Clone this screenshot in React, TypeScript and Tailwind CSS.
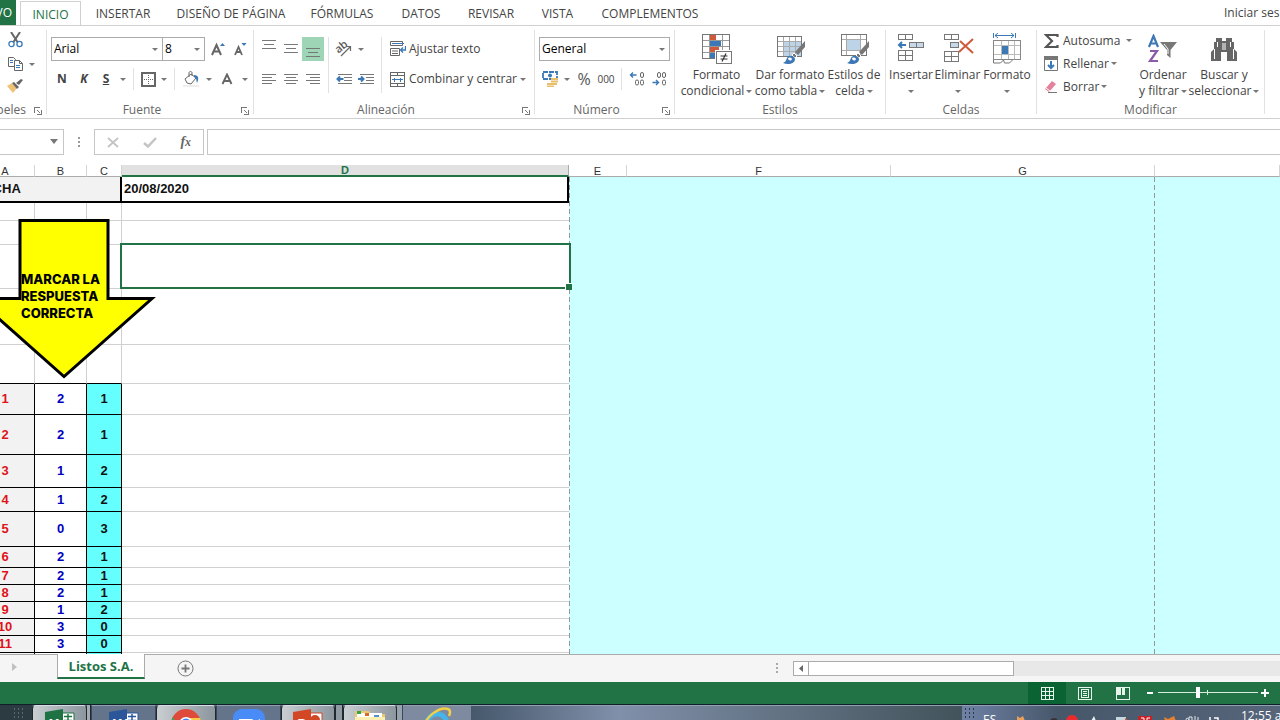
import type { ReactNode } from "react";

const tabs = [
  { label: "INICIO", width: "w-[61px]", active: true },
  { label: "INSERTAR", width: "w-[84px]" },
  { label: "DISEÑO DE PÁGINA", width: "w-[132px]" },
  { label: "FÓRMULAS", width: "w-[90px]" },
  { label: "DATOS", width: "w-[68px]" },
  { label: "REVISAR", width: "w-[72px]" },
  { label: "VISTA", width: "w-[61px]" },
  { label: "COMPLEMENTOS", width: "w-[124px]" },
];

const emptyRows = ["h-[18px]", "h-[24px]", "h-[44px]", "h-[56px]", "h-[39px]"];

const answers = [
  { n: 1, b: 2, c: 1, h: "h-[31px]" },
  { n: 2, b: 2, c: 1, h: "h-[40px]" },
  { n: 3, b: 1, c: 2, h: "h-[33px]" },
  { n: 4, b: 1, c: 2, h: "h-[24px]" },
  { n: 5, b: 0, c: 3, h: "h-[35px]" },
  { n: 6, b: 2, c: 1, h: "h-[21px]" },
  { n: 7, b: 2, c: 1, h: "h-[17px]" },
  { n: 8, b: 2, c: 1, h: "h-[17px]" },
  { n: 9, b: 1, c: 2, h: "h-[17px]" },
  { n: 10, b: 3, c: 0, h: "h-[17px]" },
  { n: 11, b: 3, c: 0, h: "h-[17px]" },
];

function Caret({ className = "" }: { className?: string }) {
  return (
    <svg width="6" height="3" viewBox="0 0 6 3" className={`inline-block shrink-0 ${className}`} aria-hidden="true">
      <path d="M0 0h6L3 3z" fill="#777" />
    </svg>
  );
}

function CaretButton({ label }: { label: string }) {
  return (
    <button aria-label={label} className="flex h-6 w-3 shrink-0 items-center justify-center">
      <Caret />
    </button>
  );
}

function Tool({ label, width = "w-[22px]", className = "", children }: { label: string; width?: string; className?: string; children: ReactNode }) {
  return (
    <button aria-label={label} className={`flex h-6 shrink-0 items-center justify-center ${width} ${className}`}>
      {children}
    </button>
  );
}

function Sep({ tall = false }: { tall?: boolean }) {
  return <span className={`mx-1 w-px shrink-0 bg-[#e1e1e1] ${tall ? "h-14" : "h-[22px]"}`} />;
}

function Group({ title, width, launcher = false, children }: { title: string; width: string; launcher?: boolean; children: ReactNode }) {
  return (
    <section aria-label={title} className={`h-[84px] shrink-0 border-r border-[#e1e1e1] ${width}`}>
      <div className="h-[72px]">{children}</div>
      <div className="flex h-4 items-center">
        <span className={`flex-1 text-center text-[#666] ${launcher ? "pr-1" : ""}`}>{title}</span>
        {launcher && (
          <button aria-label={`Más opciones de ${title}`} className="mt-px mr-1">
            <svg width="8" height="8" viewBox="0 0 8 8" fill="none" stroke="#777" shapeRendering="crispEdges">
              <path d="M.5 6V.5H6M3 3l3.5 3.5M7.5 3v4.500H3" />
            </svg>
          </button>
        )}
      </div>
    </section>
  );
}

function BigButton({ icon, top, bottom, width }: { icon: ReactNode; top: string; bottom?: string; width: string }) {
  return (
    <button className={`flex shrink-0 flex-col items-center pt-[3px] whitespace-nowrap ${width}`}>
      <span className="mb-[2px] flex h-8 items-center">{icon}</span>
      <span className="leading-4">{top}</span>
      <span className="flex h-4 items-center gap-[2px] leading-4">
        {bottom}
        <Caret />
      </span>
    </button>
  );
}

function Combo({ label, value, width }: { label: string; value: string; width: string }) {
  return (
    <div className={`relative shrink-0 ${width}`}>
      <select aria-label={label} className="h-6 w-full appearance-none border border-[#ababab] bg-white pl-[2px] text-black outline-none">
        <option>{value}</option>
      </select>
      <Caret className="pointer-events-none absolute top-[11px] right-[5px]" />
    </div>
  );
}

function Lines({ d }: { d: string }) {
  return (
    <svg width="14" height="12" viewBox="0 0 14 12" stroke="#777" shapeRendering="crispEdges" aria-hidden="true">
      <path d={d} />
    </svg>
  );
}

function IndentIcon({ right = false }: { right?: boolean }) {
  return (
    <svg width="16" height="12" viewBox="0 0 16 12" fill="none" aria-hidden="true">
      <path d="M2 1.500h14M8 4.500h8M8 7.500h8M2 10.500h14" stroke="#777" shapeRendering="crispEdges" />
      <path d={right ? "M0 6h6M3 3.500L5.500 6 3 8.500" : "M1.500 6h6M4 3.500L1.500 6 4 8.500"} stroke="#3b78b5" strokeWidth="2" />
    </svg>
  );
}

function Brush() {
  return (
    <g>
      <path d="M29 8v6l-7 8-3-3z" fill="#777" />
      <path d="M18 20l3 3-2 2-3-3z" fill="#777" stroke="#fff" />
      <path d="M7 30c3-1 3-3 4-5 2-4 8-2 8 1 0 5-7 6-12 4z" fill="#3b78b5" />
      <path d="M12 26c0-2 3-2 4 0-1 2-2 2-4 0z" fill="#fff" />
    </g>
  );
}

function ConditionalIcon() {
  return (
    <svg width="32" height="32" viewBox="1 0 32 32" aria-hidden="true">
      <g shapeRendering="crispEdges">
        <path d="M2.500 1.500h27v24h-27zM2.500 7.500h27M2.500 13.500h27M2.500 19.500h27M9.500 1.500v24M22.500 1.500v24" fill="#fff" stroke="#999" />
        <path d="M2.500 1.500h27v24h-27z" fill="none" stroke="#777" />
        <path d="M10 2h6v5h-6zM10 14h9v5h-9z" fill="#d0583b" />
        <path d="M10 8h11v5h-11zM10 20h6v5h-6z" fill="#3b78b5" />
        <path d="M15 17h17v2H17v12h-2z" fill="#fff" />
        <path d="M16.500 18.500h15v12h-15z" fill="#fff" stroke="#777" />
      </g>
      <path d="M20.500 23h7M20.500 26h7M26 20.500l-4 8" stroke="#333" fill="none" strokeWidth="1.200" />
    </svg>
  );
}

function TableFormatIcon() {
  return (
    <svg width="32" height="32" viewBox="0 0 32 32" className="ml-1" aria-hidden="true">
      <g shapeRendering="crispEdges">
        <path d="M1.500 3.500h24v20h-24z" fill="#fff" />
        <path d="M8 9h18v14H8z" fill="#bdd3e8" />
        <path d="M1.500 8.500h24M1.500 13.500h24M1.500 18.500h24M7.500 3.500v20M13.500 3.500v20M19.500 3.500v20" stroke="#aaa" />
        <path d="M1.500 3.500h24v20h-24z" fill="none" stroke="#777" />
      </g>
      <Brush />
    </svg>
  );
}

function CellStyleIcon() {
  return (
    <svg width="32" height="32" viewBox="0 0 32 32" className="ml-1" aria-hidden="true">
      <g shapeRendering="crispEdges">
        <path d="M1.500 1.500h25v21h-25zM1.500 6.500h25M1.500 17.500h25M6.500 1.500v21M20.500 1.500v21" fill="#fff" stroke="#aaa" />
        <path d="M1.500 1.500h25v21h-25z" fill="none" stroke="#777" />
        <path d="M7 7h13v10H7z" fill="#bdd3e8" />
      </g>
      <Brush />
    </svg>
  );
}

function InsertIcon() {
  return (
    <svg width="28" height="32" viewBox="0 0 28 32" fill="#fff" stroke="#777" aria-hidden="true">
      <path shapeRendering="crispEdges" d="M1.500 1.500h14v5h-14zM8.500 1.500v5M1.500 17.500h14v10h-14zM8.500 17.500v10M1.500 22.500h14" />
      <path shapeRendering="crispEdges" d="M12.500 9.500h14v5h-14zM19.500 9.500v5" fill="#c9d8e8" />
      <path d="M2 12h7M5 9l-3 3 3 3" stroke="#3b78b5" strokeWidth="2" fill="none" />
    </svg>
  );
}

function DeleteIcon() {
  return (
    <svg width="30" height="32" viewBox="0 0 30 32" fill="#fff" stroke="#777" className="ml-[3px]" aria-hidden="true">
      <path shapeRendering="crispEdges" d="M.500 1.500h14v5h-14zM7.500 1.500v5M.500 18.500h14v10h-14zM7.500 18.500v10M.500 23.500h14" />
      <path shapeRendering="crispEdges" d="M6.500 9.500h8v5h-8z" fill="#c9d8e8" />
      <path d="M16 8l13 12M29 6L15 19" stroke="#d0583b" strokeWidth="2" />
    </svg>
  );
}

function FormatIcon() {
  return (
    <svg width="30" height="32" viewBox="0 0 30 32" fill="none" stroke="#999" aria-hidden="true">
      <path d="M1.500 0v5M23.500 0v5M3 2.500h19M6 0L3 2.500 6 5M19 0l3 2.500L19 5" stroke="#3b78b5" />
      <g shapeRendering="crispEdges">
        <path d="M1.500 7.500h27v19h-27zM1.500 12.500h27M1.500 21.500h27M9.500 7.500v19M16.500 7.500v19M22.500 7.500v19" fill="#fff" stroke="#bbb" />
        <path d="M1.500 7.500h27v19h-27z" stroke="#888" />
        <path d="M10 13h6v8h-6z" fill="#3b78b5" stroke="none" />
      </g>
      <path d="M1.500 27v3h7l3-3 1 3h5l3-3" stroke="#777" />
    </svg>
  );
}

function BinocularsIcon() {
  return (
    <svg width="28" height="26" viewBox="0 0 28 26" fill="#666" aria-hidden="true">
      <path d="M6 2h6v3h4V2h6v4h2v7l3 3v9H17v-9h-6v9H1v-9l3-3V6h2z" />
      <path d="M7.500 6v5M20.500 6v5M4.500 13v10M23.500 13v10M13 7v7M15 7v7" stroke="#fff" />
    </svg>
  );
}

function SortFilterIcon() {
  return (
    <svg width="32" height="30" viewBox="0 0 32 30" aria-hidden="true">
      <path d="M2 13L6.500 2 11 13M3.500 9.500h6" fill="none" stroke="#3b78b5" strokeWidth="2.200" />
      <path d="M3 17h7L3 27h8" fill="none" stroke="#8b5aa8" strokeWidth="2.200" />
      <path d="M13 8h17l-6.500 8v8L20 21v-5z" fill="#777" />
      <path d="M17 10l4 5v5" fill="none" stroke="#fff" />
    </svg>
  );
}

function SmallButton({ icon, label, gap = "gap-1" }: { icon: ReactNode; label: string; gap?: string }) {
  return (
    <button className="flex h-[23px] items-center gap-1 whitespace-nowrap">
      <span className="flex w-4 justify-center">{icon}</span>
      <span className={`flex items-center ${gap}`}>
        {label}
        <Caret />
      </span>
    </button>
  );
}

function Ribbon() {
  return (
    <div className="flex h-[93px] shrink-0 overflow-hidden border-b border-[#d0d0d0] pt-1 text-[#444]">
      <Group title="Portapapeles" width="-ml-[52px] w-[99px]" launcher>
        <div className="flex h-full flex-col pl-[56px]">
          <Tool label="Cortar" className="-mt-[2px]">
            <svg width="15" height="16" viewBox="0 0 15 16" fill="none" aria-hidden="true">
              <path d="M3 0l6.500 10M12 0L5.500 10" stroke="#666" strokeWidth="2" />
              <circle cx="3.500" cy="12" r="2.600" stroke="#3b78b5" strokeWidth="1.300" />
              <circle cx="11.500" cy="12" r="2.600" stroke="#3b78b5" strokeWidth="1.300" />
            </svg>
          </Tool>
          <div className="flex">
            <Tool label="Copiar">
              <svg width="15" height="14" viewBox="0 0 15 14" fill="#fff" stroke="#666" aria-hidden="true">
                <path d="M.500.500h5l2 2v7h-7z" />
                <path d="M6.500 3.500h5l3 3v7h-8zM11.500 3.500v3h3" />
                <path d="M2 3.500h3M2 5.500h3M8 8.500h4M8 10.500h4" stroke="#3b78b5" />
              </svg>
            </Tool>
            <CaretButton label="Opciones de copia" />
          </div>
          <Tool label="Copiar formato" className="-mt-[2px]">
            <svg width="16" height="14" viewBox="0 0 16 14" aria-hidden="true">
              <path d="M0 7l5-3 5 5-4 5z" fill="#eec277" />
              <path d="M5 4l2-1 5 5-2 2zM9 4l5-4 2 1-4 5z" fill="#666" />
            </svg>
          </Tool>
        </div>
      </Group>

      <Group title="Fuente" width="w-[207px]" launcher>
        <div className="flex flex-col gap-[6px] pt-[7px] pl-1">
          <div className="flex items-center">
            <Combo label="Fuente" value="Arial" width="w-[112px]" />
            <Combo label="Tamaño de fuente" value="8" width="-ml-px w-[43px]" />
            <Tool label="Aumentar tamaño" className="ml-[2px]">
              <svg width="14" height="14" viewBox="0 0 14 14" aria-hidden="true">
                <path d="M1 13L5.500 3 10 13M2.800 9.500h5.400" fill="none" stroke="#666" strokeWidth="2" />
                <path d="M9 4l2.500-3L14 4z" fill="#3b78b5" />
              </svg>
            </Tool>
            <Tool label="Disminuir tamaño">
              <svg width="13" height="14" viewBox="0 0 13 14" aria-hidden="true">
                <path d="M1 13l3.500-8L8 13M2.500 10h4" fill="none" stroke="#666" strokeWidth="1.800" />
                <path d="M7.500 1h5L10 4z" fill="#3b78b5" />
              </svg>
            </Tool>
          </div>
          <div className="flex items-center">
            <Tool label="Negrita"><b>N</b></Tool>
            <Tool label="Cursiva"><b className="italic">K</b></Tool>
            <Tool label="Subrayado"><b className="underline">S</b></Tool>
            <CaretButton label="Opciones de subrayado" />
            <Sep />
            <Tool label="Bordes" width="w-5">
              <svg width="15" height="15" viewBox="0 0 15 15" fill="none" stroke="#666" shapeRendering="crispEdges" aria-hidden="true">
                <path d="M1 1h13v13H1z" strokeWidth="2" />
                <path d="M7.500 3v9M3 7.500h9" strokeDasharray="1 1" />
              </svg>
            </Tool>
            <CaretButton label="Opciones de bordes" />
            <Sep />
            <Tool label="Color de relleno" width="w-6">
              <svg width="16" height="16" viewBox="0 0 16 16" fill="none" aria-hidden="true">
                <path d="M2 8l6-5 5 4-5 6-4-1zM6 6V2c0-2 3-2 3 0v3" stroke="#666" />
                <path d="M11 4c5 0 5 4 3 8-1-3 0-5-3-6z" fill="#3b78b5" />
                <path d="M0 14h16v2H0z" fill="#eee" />
              </svg>
            </Tool>
            <CaretButton label="Opciones de relleno" />
            <Tool label="Color de fuente" width="w-6">
              <svg width="12" height="12" viewBox="0 0 12 12" fill="none" stroke="#666" strokeWidth="1.900" aria-hidden="true">
                <path d="M1.500 11L6 1.500 10.500 11M3 8h6" />
              </svg>
            </Tool>
            <CaretButton label="Opciones de color de fuente" />
          </div>
        </div>
      </Group>

      <Group title="Alineación" width="w-[281px]" launcher>
        <div className="flex items-start pt-[7px] pl-1">
          <div className="grid grid-cols-3 gap-y-[6px]">
            <Tool label="Alinear arriba" className="pb-2"><Lines d="M0 1.500h14M2 5.500h10M0 9.500h14" /></Tool>
            <Tool label="Alinear en medio"><Lines d="M0 1.500h14M2 5.500h10M0 9.500h14" /></Tool>
            <Tool label="Alinear abajo" className="bg-[#9fd5b7] pt-2"><Lines d="M0 1.500h14M2 5.500h10M0 9.500h14" /></Tool>
            <Tool label="Izquierda"><Lines d="M0 1.500h14M0 4.500h10M0 7.500h14M0 10.500h10" /></Tool>
            <Tool label="Centrar"><Lines d="M0 1.500h14M2 4.500h10M0 7.500h14M2 10.500h10" /></Tool>
            <Tool label="Derecha"><Lines d="M0 1.500h14M4 4.500h10M0 7.500h14M4 10.500h10" /></Tool>
          </div>
          <Sep tall />
          <div className="flex w-11 flex-col gap-[6px]">
            <div className="flex">
              <Tool label="Orientación">
                <svg width="18" height="17" viewBox="0 0 18 17" aria-hidden="true">
                  <text x="1" y="10" transform="rotate(-40 6 8)" fontSize="11" fontWeight="600" fill="#555" fontFamily="Open Sans, sans-serif">ab</text>
                  <path d="M6 15l9-9M11 5.500h4.500V10" fill="none" stroke="#666" strokeWidth="1.200" />
                </svg>
              </Tool>
              <CaretButton label="Opciones de orientación" />
            </div>
            <div className="flex">
              <Tool label="Disminuir sangría"><IndentIcon /></Tool>
              <Tool label="Aumentar sangría"><IndentIcon right /></Tool>
            </div>
          </div>
          <Sep tall />
          <div className="flex flex-1 flex-col gap-[6px] pl-1">
            <button className="flex h-6 items-center gap-[3px]">
              <svg width="16" height="16" viewBox="0 0 16 16" fill="none" stroke="#666" aria-hidden="true">
                <path d="M.500.500h12v4h-12zM.500 7.500h9v7h-9zM2 10h6M2 12.500h6" />
                <path d="M2 2.500h12" stroke="#3b78b5" />
                <path d="M15.500 5v4h-5M13 6.500L10.500 9l2.500 2.500" stroke="#3b78b5" strokeWidth="1.300" />
              </svg>
              Ajustar texto
            </button>
            <div className="flex items-center">
              <button className="flex h-6 items-center gap-[3px] whitespace-nowrap">
                <svg width="16" height="15" viewBox="0 0 16 15" fill="none" stroke="#666" shapeRendering="crispEdges" aria-hidden="true">
                  <path d="M.500.500h14v14H.500zM.500 3.500h14M.500 11.500h14M7.500.500v3M7.500 11.500v3" />
                  <path d="M2 7.500h11M4.500 5.500v4M10.500 5.500v4" stroke="#3b78b5" />
                </svg>
                Combinar y centrar
              </button>
              <span className="flex-1" />
              <span className="mr-[5px] flex"><CaretButton label="Opciones de combinar" /></span>
            </div>
          </div>
        </div>
      </Group>

      <Group title="Número" width="w-[140px]" launcher>
        <div className="flex flex-col gap-[6px] pt-[7px] pl-1">
          <Combo label="Formato de número" value="General" width="w-[131px]" />
          <div className="flex items-center">
            <Tool label="Formato de contabilidad">
              <svg width="16" height="16" viewBox="0 0 16 16" aria-hidden="true">
                <path d="M1 1h14v7H1z" fill="#fff" stroke="#3b78b5" strokeWidth="1.800" strokeDasharray="5 1" />
                <circle cx="8" cy="4.500" r="2" fill="#3b78b5" />
                <path d="M9 8h7M9 10.500h7M5 13h6M9 13h6M5 15.500h7" stroke="#eabf6b" strokeWidth="1.900" />
              </svg>
            </Tool>
            <CaretButton label="Opciones de contabilidad" />
            <Tool label="Porcentaje" className="text-[16px] text-[#555]">%</Tool>
            <Tool label="Estilo millares" className="text-[10px]">000</Tool>
            <Sep />
            <Tool label="Aumentar decimales">
              <svg width="16" height="14" viewBox="0 0 16 14" fill="none" stroke="#666" aria-hidden="true">
                <rect x="11.500" y=".500" width="3" height="5" rx="1.500" />
                <rect x="6.500" y="8" width="3" height="5" rx="1.500" /><rect x="11.500" y="8" width="3" height="5" rx="1.500" />
                <path d="M1.500 3h6M4 .500L1.500 3 4 5.500" stroke="#3b78b5" strokeWidth="1.400" />
              </svg>
            </Tool>
            <Tool label="Disminuir decimales">
              <svg width="16" height="14" viewBox="0 0 16 14" fill="none" stroke="#666" aria-hidden="true">
                <rect x="6.500" y=".500" width="3" height="5" rx="1.500" /><rect x="11.500" y=".500" width="3" height="5" rx="1.500" />
                <rect x="11.500" y="8" width="3" height="5" rx="1.500" />
                <path d="M1.500 10.500h6M5 8l2.500 2.500L5 13" stroke="#3b78b5" strokeWidth="1.400" />
              </svg>
            </Tool>
          </div>
        </div>
      </Group>

      <Group title="Estilos" width="w-[211px]">
        <div className="flex pl-[5px]">
          <BigButton icon={<ConditionalIcon />} top="Formato" bottom="condicional" width="w-[73px]" />
          <BigButton icon={<TableFormatIcon />} top="Dar formato" bottom="como tabla" width="w-[74px]" />
          <BigButton icon={<CellStyleIcon />} top="Estilos de" bottom="celda" width="w-[54px]" />
        </div>
      </Group>

      <Group title="Celdas" width="w-[151px]">
        <div className="flex pl-[2px]">
          <BigButton icon={<InsertIcon />} top="Insertar" width="w-[46px]" />
          <BigButton icon={<DeleteIcon />} top="Eliminar" width="w-[47px]" />
          <BigButton icon={<FormatIcon />} top="Formato" width="w-[52px]" />
        </div>
      </Group>

      <Group title="Modificar" width="w-[228px]">
        <div className="flex pl-[6px]">
          <div className="-mt-px w-[95px]">
            <SmallButton
              label="Autosuma"
              gap="gap-[6px]"
              icon={
                <svg width="15" height="16" viewBox="0 0 15 16" aria-hidden="true">
                  <path d="M13.500 4V2H2l6 6-6 6h11.500v-2" fill="none" stroke="#555" strokeWidth="2.200" />
                </svg>
              }
            />
            <SmallButton
              label="Rellenar"
              gap="gap-[2px]"
              icon={
                <svg width="14" height="15" viewBox="0 0 14 15" fill="none" aria-hidden="true">
                  <path d="M.500 1.500h13v13H.500z" stroke="#777" />
                  <path d="M0 0h14v4H0z" fill="#777" />
                  <path d="M7 5v7M4 9l3 3 3-3" stroke="#3b78b5" strokeWidth="2" />
                </svg>
              }
            />
            <SmallButton
              label="Borrar"
              gap="gap-[2px]"
              icon={
                <svg width="14" height="14" viewBox="0 0 14 14" aria-hidden="true">
                  <path d="M1 9l7-8 4 3-7 8z" fill="#e5819a" />
                  <path d="M2 8l4 3" stroke="#fff" />
                  <path d="M4 12.500h9" stroke="#777" />
                </svg>
              }
            />
          </div>
          <BigButton icon={<SortFilterIcon />} top="Ordenar" bottom="y filtrar" width="w-[50px]" />
          <BigButton icon={<BinocularsIcon />} top="Buscar y" bottom="seleccionar" width="w-[72px]" />
        </div>
      </Group>
    </div>
  );
}

function FormulaBar() {
  return (
    <div className="flex h-[46px] shrink-0 items-start pt-[10px]">
      <div className="relative -ml-4 w-20">
        <input aria-label="Cuadro de nombres" className="h-[26px] w-full border border-[#c6c6c6] outline-none" />
        <svg className="pointer-events-none absolute top-[10px] right-[6px]" width="8" height="5" viewBox="0 0 8 5" aria-hidden="true">
          <path d="M0 0h8L4 5z" fill="#777" />
        </svg>
      </div>
      <svg className="mx-[14px] mt-2" width="2" height="11" viewBox="0 0 2 11" aria-hidden="true">
        <path d="M0 0h2v2H0zM0 4h2v2H0zM0 8h2v2H0z" fill="#999" />
      </svg>
      <div className="flex h-[26px] w-[110px] items-center justify-around border border-[#c6c6c6]">
        <button aria-label="Cancelar">
          <svg width="12" height="11" viewBox="0 0 12 11" stroke="#c4c4c4" strokeWidth="1.800"><path d="M1 1l10 9M11 1L1 10" /></svg>
        </button>
        <button aria-label="Aceptar">
          <svg width="14" height="11" viewBox="0 0 14 11" fill="none" stroke="#c4c4c4" strokeWidth="2.500"><path d="M1 6l4 3.500L13 1" /></svg>
        </button>
        <button aria-label="Insertar función" className="font-['Liberation_Serif',serif] text-[14px] leading-4 font-bold text-[#666] italic">
          f<span className="text-[12px]">x</span>
        </button>
      </div>
      <input aria-label="Barra de fórmulas" className="ml-[3px] h-[26px] min-w-0 flex-1 border border-r-0 border-[#c6c6c6] outline-none" />
    </div>
  );
}

function Sheet() {
  const head = "h-3 border-r border-b border-[#ababab] border-r-[#d4d4d4] p-0 text-[11px] leading-[10px] font-normal text-[#333]";
  return (
    <div className="relative min-h-0 flex-1 overflow-hidden font-['Liberation_Sans',Arial,sans-serif]">
      <table className="-ml-6 w-[calc(100%+24px)] table-fixed border-separate border-spacing-0">
        <colgroup>
          <col className="w-[59px]" />
          <col className="w-[52px]" />
          <col className="w-[35px]" />
          <col className="w-[447px]" />
          <col className="w-[58px]" />
          <col className="w-[264px]" />
          <col className="w-[264px]" />
          <col />
        </colgroup>
        <thead>
          <tr>
            <th className={head}>A</th>
            <th className={head}>B</th>
            <th className={head}>C</th>
            <th className="h-3 border-r border-b-2 border-r-[#ababab] border-b-[#217346] bg-[#e1e1e1] p-0 text-[11px] leading-[10px] font-bold text-[#217346]">D</th>
            <th className={head}>E</th>
            <th className={head}>F</th>
            <th className={head}>G</th>
            <th className={head} aria-label="H" />
          </tr>
        </thead>
        <tbody className="text-[13px] leading-4">
          <tr>
            <td colSpan={3} className="h-[26px] border-r-2 border-b-2 border-black bg-[#f2f2f2] p-0 font-bold text-[#111]">FECHA</td>
            <td className="border-r-2 border-b-2 border-black p-0 pl-[2px] font-bold text-[#111]">20/08/2020</td>
            <td
              colSpan={3}
              rowSpan={18}
              className="bg-[#ccffff] bg-[repeating-linear-gradient(to_bottom,#999_0_5px,transparent_5px_8px),repeating-linear-gradient(to_bottom,#999_0_5px,transparent_5px_8px)] bg-[length:1px_100%] bg-[position:left_top,right_top] bg-no-repeat p-0"
            />
            <td rowSpan={18} className="bg-[#ccffff] p-0" />
          </tr>
          {emptyRows.map((h, i) => {
            const edge = i === emptyRows.length - 1 ? "border-b-black" : "border-b-[#d0d0d0]";
            return (
              <tr key={i}>
                <td className={`border-r border-b border-r-[#d0d0d0] p-0 ${h} ${edge}`} />
                <td className={`border-r border-b border-r-[#d0d0d0] p-0 ${edge}`} />
                <td className={`border-r border-b border-r-[#d0d0d0] p-0 ${edge}`} />
                <td className="border-b border-[#d0d0d0] p-0" />
              </tr>
            );
          })}
          {answers.map((row) => (
            <tr key={row.n} className="text-center font-bold">
              <td className={`border-r border-b border-black bg-[#f2f2f2] p-0 text-[#e0121a] ${row.h}`}>{row.n}</td>
              <td className="border-r border-b border-black p-0 text-[#0000c0]">{row.b}</td>
              <td className="border-r border-b border-black bg-[#66ffff] p-0 text-[#111]">{row.c}</td>
              <td className="border-b border-[#d0d0d0] p-0" />
            </tr>
          ))}
          <tr>
            <td className="h-5 border-r border-black bg-[#f2f2f2] p-0" />
            <td className="border-r border-black p-0" />
            <td className="border-r border-black bg-[#66ffff] p-0" />
            <td className="p-0" />
          </tr>
        </tbody>
      </table>

      <div className="pointer-events-none absolute top-[78px] left-[120px] h-[46px] w-[451px] border-2 border-[#217346]">
        <span className="absolute -right-[3px] -bottom-[3px] size-[7px] border-t border-l border-white bg-[#217346]" />
      </div>

      <div className="absolute top-[53px] -left-[30px] h-[162px] w-[188px]">
        <svg width="188" height="162" viewBox="0 0 188 162" className="block" aria-hidden="true">
          <path d="M50 2.500h88V80.500h44L94 158.500 6 80.500h44z" fill="#ffff00" stroke="#000" strokeWidth="3" />
        </svg>
        <p className="absolute top-[53px] left-[51px] w-[110px] font-['Inter',sans-serif] text-[13px] leading-[17px] font-extrabold text-black">
          MARCAR LA
          <br />
          RESPUESTA
          <br />
          CORRECTA
        </p>
      </div>
    </div>
  );
}

function SheetTabs() {
  return (
    <div className="flex h-7 shrink-0 items-start border-t border-[#ababab] bg-[#f5f5f5]">
      <button aria-label="Hoja siguiente" className="flex h-6 w-[57px] items-center pl-3">
        <svg width="5" height="8" viewBox="0 0 5 8"><path d="M0 0l5 4-5 4z" fill="#c0c0c0" /></svg>
      </button>
      <button className="-mt-px h-[25px] w-[88px] border-x border-b-2 border-x-[#ababab] border-b-[#217346] bg-white text-[13px] font-bold whitespace-nowrap text-[#217346]">
        Listos S.A.
      </button>
      <button aria-label="Hoja nueva" className="mt-[5px] ml-8">
        <svg width="17" height="17" viewBox="0 0 17 17" fill="none" stroke="#777">
          <circle cx="8.500" cy="8.500" r="7.500" />
          <path d="M8.500 4.500v8M4.500 8.500h8" strokeWidth="1.800" />
        </svg>
      </button>
      <span className="w-[582px] shrink-0" />
      <svg className="mt-2 shrink-0" width="2" height="11" viewBox="0 0 2 11" aria-hidden="true">
        <path d="M0 0h2v2H0zM0 4h2v2H0zM0 8h2v2H0z" fill="#aaa" />
      </svg>
      <div className="mt-[6px] ml-[15px] flex h-[15px] flex-1 bg-[#e8e8e8]">
        <button aria-label="Desplazar a la izquierda" className="flex w-4 items-center justify-center border border-[#ababab] bg-white">
          <svg width="4" height="7" viewBox="0 0 4 7"><path d="M4 0v7L0 3.500z" fill="#666" /></svg>
        </button>
        <div className="-ml-px w-[206px] border border-[#ababab] bg-white" />
      </div>
    </div>
  );
}

function StatusBar() {
  return (
    <div className="flex h-[22px] shrink-0 items-center justify-end bg-[#217346] pr-2">
      <button aria-label="Normal" className="flex h-full w-[38px] items-center justify-center bg-[#0a6332]">
        <svg width="13" height="13" viewBox="0 0 13 13" fill="none" stroke="#e8f5ec" shapeRendering="crispEdges">
          <path d="M.500.500h12v12H.500zM4.500.500v12M8.500.500v12M.500 4.500h12M.500 8.500h12" />
        </svg>
      </button>
      <button aria-label="Diseño de página" className="flex h-full w-[38px] items-center justify-center">
        <svg width="14" height="13" viewBox="0 0 14 13" fill="none" stroke="#e8f5ec" shapeRendering="crispEdges">
          <path d="M.500.500h13v12H.500zM3.500 2.500h7v8h-7zM5 4.500h4M5 6.500h4M5 8.500h4" />
        </svg>
      </button>
      <button aria-label="Salto de página" className="flex h-full w-[38px] items-center justify-center">
        <svg width="14" height="13" viewBox="0 0 14 13" fill="none" stroke="#e8f5ec" shapeRendering="crispEdges">
          <path d="M.500.500h13v12H.500z" />
          <path d="M1 1h4v7H1zM6 1h3v7H6z" fill="#e8f5ec" stroke="none" />
        </svg>
      </button>
      <button aria-label="Alejar" className="flex w-4 items-center justify-center">
        <svg width="6" height="2"><path d="M0 0h6v2H0z" fill="#fff" /></svg>
      </button>
      <div className="relative h-3 w-[100px]">
        <svg className="absolute inset-x-0 top-0 w-full" height="12" viewBox="0 0 100 12" shapeRendering="crispEdges" aria-hidden="true">
          <path d="M0 5h100v1H0zM49 3h1v5h-1z" fill="#d8ebdf" />
          <path d="M38 0h4v11h-4z" fill="#fff" />
        </svg>
        <input type="range" aria-label="Zoom" defaultValue={40} className="absolute inset-0 w-full opacity-0" />
      </div>
      <button aria-label="Acercar" className="flex w-[14px] items-center justify-center">
        <svg width="8" height="8"><path d="M0 3h3V0h2v3h3v2H5v3H3V5H0z" fill="#fff" /></svg>
      </button>
    </div>
  );
}

function TaskButton({ label, width, lit = false, children }: { label: string; width: string; lit?: boolean; children: ReactNode }) {
  return (
    <button
      aria-label={label}
      className={`flex h-10 shrink-0 justify-center overflow-hidden pt-[3px] ${width} ${lit ? "rounded-t-sm border border-[#20282e] border-t-[#d8dde0] bg-linear-to-r from-[#c9ced2] to-[#8c969e]" : "border border-[#39475a] border-t-[#93a0b0] bg-[#64748b]"}`}
    >
      {children}
    </button>
  );
}

function OfficeIcon({ letter, color, round = false }: { letter: string; color: string; round?: boolean }) {
  return (
    <svg width="30" height="30" viewBox="0 0 30 30" aria-hidden="true">
      <path d="M14 4h15v22H14z" fill="#fff" stroke={color} />
      {round ? (
        <circle cx="22" cy="11" r="5" fill={color} />
      ) : (
        <path d="M19 7.500h8M19 11.500h8M23 5v10" stroke={color} strokeWidth="1.500" />
      )}
      <path d="M0 3l18-3v30L0 27z" fill={color} />
      <text x="4" y="20" fontSize="15" fontWeight="bold" fill="#fff" fontFamily="Open Sans, sans-serif">{letter}</text>
    </svg>
  );
}

function Taskbar() {
  return (
    <footer className="flex h-4 shrink-0 items-start overflow-hidden border-t border-[#10202a] bg-linear-to-r from-[#3d4a54] via-[#7b8699] via-45% to-[#47566a] text-white">
      <div className="flex h-4 w-8 shrink-0 justify-end bg-[#2c3a42] pt-[3px] pr-[9px]">
        <svg width="9" height="12" aria-hidden="true">
          <path d="M0 1h9M0 5h9M0 9h9" stroke="#8b979e" strokeDasharray="1 3" />
        </svg>
      </div>
      <TaskButton label="Excel" width="w-[55px]" lit><OfficeIcon letter="X" color="#1f7244" /></TaskButton>
      <span className="h-4 w-1 shrink-0 border-r border-[#20282e] bg-[#a5adb3]" />
      <TaskButton label="Word" width="w-[65px]"><OfficeIcon letter="W" color="#2b579a" /></TaskButton>
      <TaskButton label="Chrome" width="w-[60px]" lit>
        <svg width="30" height="30" viewBox="0 0 30 30" aria-hidden="true">
          <circle cx="15" cy="15" r="15" fill="#de4b3b" />
          <path d="M15 9h14a15 15 0 0 1-14 21z" fill="#f7cd45" />
          <path d="M2 8l13 22A15 15 0 0 1 2 8z" fill="#3aa757" />
          <circle cx="15" cy="15" r="7" fill="#fff" />
          <circle cx="15" cy="15" r="5.500" fill="#4284f3" />
        </svg>
      </TaskButton>
      <TaskButton label="Zoom" width="w-[65px]">
        <svg width="32" height="30" viewBox="0 0 32 30" aria-hidden="true">
          <rect width="32" height="30" rx="9" fill="#4a8cf7" />
          <path d="M6 10h12a3 3 0 0 1 3 3v8H6zM22 13l5-3v11l-5-3z" fill="#fff" />
        </svg>
      </TaskButton>
      <TaskButton label="PowerPoint" width="w-[54px]" lit><OfficeIcon letter="P" color="#d24726" round /></TaskButton>
      <span className="h-4 w-2 shrink-0 border-x border-[#20282e] bg-[#8f9aa3]" />
      <TaskButton label="Explorador" width="w-[54px]" lit>
        <svg width="32" height="30" viewBox="0 0 32 30" aria-hidden="true">
          <path d="M1 2h14l2 3h14v22H1z" fill="#e8c872" />
          <path d="M3 4h25v4H3z" fill="#fff" />
          <path d="M3 2h4v3H3z" fill="#37a33c" />
          <path d="M11 4h4v3h-4z" fill="#d96a2b" />
          <path d="M20 6h5v3h-5z" fill="#4a93cf" />
          <path d="M1 8h30v20H1z" fill="#fbeeb0" />
        </svg>
      </TaskButton>
      <span className="h-4 w-[6px] shrink-0 border-r border-[#39475a] bg-[#98a2ad]" />
      <button aria-label="Internet Explorer" className="flex h-4 w-[68px] shrink-0 justify-center border-t border-[#93a0b0] bg-[#7d8aa0] pt-px">
        <svg width="30" height="30" viewBox="0 0 30 30" fill="none" className="shrink-0" aria-hidden="true">
          <circle cx="15" cy="17" r="10" stroke="#46b4e8" strokeWidth="5" />
          <path d="M7 17h16" stroke="#46b4e8" strokeWidth="4" />
          <path d="M2 22C2 10 18-1 26 2c3 1 2 5 1 7" stroke="#f3cf45" strokeWidth="2.500" />
        </svg>
      </button>
      <span className="h-4 flex-1 border-t border-[#93a0b0] bg-linear-to-r from-[#46586c] via-[#8190aa] via-30% to-[#42535b]" />
      <div className="flex h-4 w-[318px] shrink-0 border-t border-[#93a0b0] bg-linear-to-r from-[#6f82a6] via-[#47576a] via-30% to-[#56657a] text-[12px]">
        <svg className="mt-[2px] ml-[3px] shrink-0" width="9" height="12" aria-hidden="true">
          <path d="M0 1h9M0 5h9M0 9h9" stroke="#17242d" strokeWidth="1.500" strokeDasharray="1 3" />
        </svg>
        <span className="mt-[6px] ml-[9px] w-5 shrink-0 leading-4">ES</span>
        <svg className="mt-[7px] ml-1 shrink-0" width="214" height="8" viewBox="0 0 214 8" aria-hidden="true">
          <path d="M10 3l3 2 3-2 2 5h-8z" fill="#eba056" />
          <circle cx="47" cy="9" r="4" fill="#3a3038" />
          <circle cx="65" cy="8" r="6" fill="#ed2a2e" />
          <path d="M84 8l3-5 2 5z" fill="#e8eef2" />
          <path d="M109 4h10v4h-10z" fill="#c3d9df" />
          <path d="M118 5l4 3h-4z" fill="#de5037" />
          <path d="M131 3h14v5h-14z" fill="#c92128" />
          <path d="M134 5h3v3M140 8V5h3" stroke="#fff" fill="none" />
          <path d="M157 4l4 2 6-3 2 5h-11z" fill="#e9802e" />
          <path d="M179 8c0-4 2-4 3 0V4h3v4M188 3v5M191 4v4" stroke="#e3e9ed" fill="none" />
          <path d="M203 4v4M207 5h4v3" stroke="#fff" strokeWidth="1.500" fill="none" />
        </svg>
        <span className="mt-[2px] ml-5 shrink-0 leading-4 whitespace-nowrap">12:55 a.m.</span>
      </div>
    </footer>
  );
}

export default function App() {
  return (
    <div className="flex h-screen flex-col overflow-hidden bg-white font-['Open_Sans','Noto_Sans',sans-serif] text-[12px] leading-4 text-[#444]">
      <nav className="flex h-[26px] shrink-0 items-end overflow-hidden border-b border-[#d0d0d0]">
        <button className="-ml-[46px] h-full w-[62px] shrink-0 bg-[#217346] pr-1 text-right text-white">ARCHIVO</button>
        <div className="ml-1 flex h-full">
          {tabs.map((tab) => (
            <button
              key={tab.label}
              className={`shrink-0 pt-[2px] text-center whitespace-nowrap ${tab.width} ${tab.active ? "mt-px h-[25px] border-x border-t border-[#d0d0d0] text-[#217346]" : "h-full"}`}
            >
              {tab.label}
            </button>
          ))}
        </div>
        <span className="flex-1" />
        <a href="#sesion" className="-mr-[17px] flex h-full shrink-0 items-center whitespace-nowrap">Iniciar sesión</a>
      </nav>
      <Ribbon />
      <FormulaBar />
      <Sheet />
      <SheetTabs />
      <StatusBar />
      <Taskbar />
    </div>
  );
}
